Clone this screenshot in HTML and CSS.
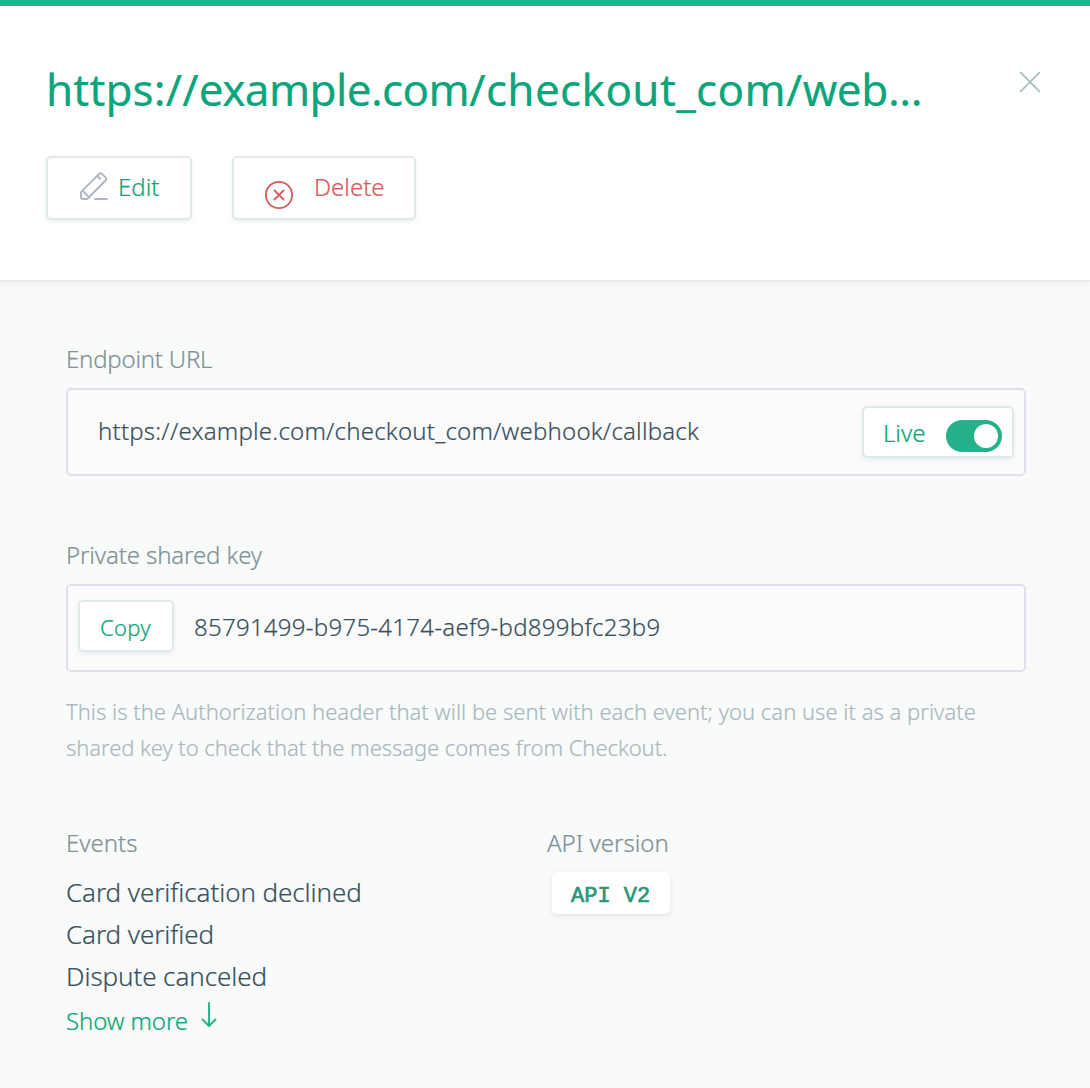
FILE: index.html
```html
<!DOCTYPE html>
<html lang="en">
<head>
<meta charset="utf-8">
<title>Webhook details</title>
<link rel="stylesheet" href="styles.css">
</head>
<body>
<header class="header">
  <div class="title-row">
    <h1 class="title"><span class="scheme">https://</span><span class="domain">example.com</span><span class="path">/checkout_com/</span>web...</h1>
    <button class="close" aria-label="Close">
      <svg width="22" height="22" viewBox="0 0 22 22"><path d="M1.700 1.700l18.600 18.600M20.300 1.700L1.700 20.300"/></svg>
    </button>
  </div>
  <div class="actions">
    <button class="button edit">
      <svg class="pencil" width="28" height="28" viewBox="0 0 28 28"><path d="M1 25V21Q1 20 1.700 19.300L19 1.900Q20.500.5 22 1.900L25.500 5.400Q27 7 25.500 8.500L8.300 26Q7.300 27 6 27H3Q1 27 1 25ZM2.500 18.700L9 25.200M18.300 4.500Q18.300 6.500 20.400 6.500M15 27H27"/></svg>
      <span>Edit</span>
    </button>
    <button class="button delete">
      <svg class="cross" width="28" height="28" viewBox="0 0 28 28"><circle cx="14" cy="14" r="13.100"/><path d="M9.500 9.500l9 9M18.500 9.500l-9 9"/></svg>
      <span>Delete</span>
    </button>
  </div>
</header>
<main class="content">
  <section class="group">
    <div class="label endpoint-label">Endpoint URL</div>
    <div class="field url-field">
      <span class="url">https://example.com/checkout_com/webhook/callback</span>
      <div class="live"><span>Live</span><i class="switch"></i></div>
    </div>
  </section>
  <section class="group">
    <div class="label key-label">Private shared key</div>
    <div class="field key-field">
      <button class="copy">Copy</button>
      <span class="key">85791499-b975-4174-aef9-bd899bfc23b9</span>
    </div>
  </section>
  <p class="hint"><span class="hint-first">This is the Authorization header that will be sent with each event; you can use it as a private</span><br><span class="hint-second">shared key to check that the message comes from Checkout.</span></p>
  <div class="columns">
    <section>
      <div class="label">Events</div>
      <ul class="events">
        <li>Card verification declined</li>
        <li>Card verified</li>
        <li>Dispute canceled</li>
      </ul>
      <a class="more"><span>Show more</span>
        <svg width="16" height="26" viewBox="0 0 16 26"><path d="M8 1v23M1.500 17.500L8 24l6.500-6.500"/></svg>
      </a>
    </section>
    <section>
      <div class="label api-label">API version</div>
      <span class="badge">API V2</span>
    </section>
  </div>
</main>
</body>
</html>
```
FILE: styles.css
```css
* { box-sizing: border-box; }
body {
  margin: 0;
  height: 1088px;
  overflow: hidden;
  background: #f9fbfa;
  font-family: "Noto Sans", sans-serif;
  font-weight: 300;
  color: #39515d;
  -webkit-text-stroke: .2px;
}
button { margin: 0; padding: 0; background: none; border: 0; font: inherit; }
svg { display: block; flex: none; fill: none; stroke-linecap: round; stroke-linejoin: round; }
.header {
  height: 280px;
  padding: 53px 46px 0;
  background: #fff;
  border-top: 6px solid #24b28a;
  box-shadow: 0 2px 0 #e8e8ee, 0 3px 8px rgba(50, 50, 93, .07);
}
.title-row { display: flex; justify-content: space-between; align-items: flex-start; }
.title { margin: 0; font-size: 44px; line-height: 60px; font-weight: 400; color: #0ba57b; white-space: nowrap; letter-spacing: -.4px; -webkit-text-stroke: .2px; }
.scheme { letter-spacing: .15px; }
.domain { letter-spacing: -.6px; }
.path { letter-spacing: .35px; }
.close { margin: 12px 3px 0 0; }
.close svg { stroke: #adbdc4; stroke-width: 1.8; }
.actions { display: flex; gap: 40px; margin-top: 37px; }
.button, .copy, .live {
  display: flex;
  background: #fff;
  border: 2px solid #e0e8eb;
  border-radius: 5px;
  box-shadow: 0 2px 5px rgba(50, 70, 93, .08);
  white-space: nowrap;
}
.button { height: 64px; font-size: 24px; line-height: 36px; }
.button span { margin-top: 11px; }
.edit { width: 146px; padding-left: 32px; color: #0ba57b; }
.edit span { margin-left: 10px; }
.pencil { margin-top: 14px; stroke: #afb4c6; stroke-width: 1.9; }
.delete { width: 184px; padding-left: 31px; color: #d65b5b; }
.delete span { margin-left: 21px; }
.cross { margin-top: 23px; stroke: #d65b5b; stroke-width: 1.8; }
.content { padding: 61px 64px 0 66px; }
.group { height: 196px; }
.label { height: 36px; font-size: 24px; line-height: 36px; color: #809298; white-space: nowrap; }
.endpoint-label { letter-spacing: -.22px; }
.key-label { letter-spacing: -.12px; }
.api-label { margin-left: 1px; }
.field {
  display: flex;
  height: 88px;
  margin-top: 11px;
  border: 2px solid #dfe0eb;
  border-radius: 5px;
  background: #fbfbfc;
  font-size: 24px;
  line-height: 36px;
  white-space: nowrap;
}
.url-field { justify-content: space-between; padding: 16px 10px 0 30px; }
.url { margin-top: 7px; letter-spacing: .21px; }
.live { width: 152px; height: 52px; padding-left: 19px; color: #0ba57b; }
.live span { width: 63px; margin-top: 7px; }
.switch { width: 56px; height: 32px; margin-top: 12px; padding: 4px; border-radius: 16px; background: #24b28a; }
.switch::after { content: ""; display: block; width: 24px; height: 24px; margin-left: auto; border-radius: 50%; background: #fff; }
.key-field { padding: 14px 10px 0; }
.copy { width: 96px; height: 52px; padding: 7px 0 0 20px; color: #0ba57b; font-size: 22px; line-height: 36px; letter-spacing: .3px; }
.key { margin: 9px 0 0 20px; letter-spacing: .27px; }
.hint { height: 72px; margin: -40px 0 0; font-size: 22px; line-height: 36px; color: #a9b8be; white-space: nowrap; }
.hint-first { letter-spacing: .01px; }
.hint-second { letter-spacing: -.07px; }
.columns { display: grid; grid-template-columns: 480px 1fr; margin-top: 60px; }
.events { margin: 10px 0 6px; padding: 0; list-style: none; font-size: 26px; line-height: 42px; letter-spacing: -.08px; white-space: nowrap; }
.more { display: flex; height: 36px; gap: 13px; font-size: 24px; line-height: 36px; letter-spacing: -.1px; color: #0ba57b; }
.more svg { margin-top: -1px; stroke: #24b28a; stroke-width: 1.9; }
.badge {
  display: block;
  width: 118px;
  height: 42px;
  margin: 11px 0 0 6px;
  padding-left: 19px;
  border-radius: 5px;
  background: #fff;
  box-shadow: 0 2px 5px rgba(50, 50, 93, .12);
  font: 400 22px/49px "Liberation Mono", monospace;
  -webkit-text-stroke: .7px;
  color: #2a977a;
}
```
